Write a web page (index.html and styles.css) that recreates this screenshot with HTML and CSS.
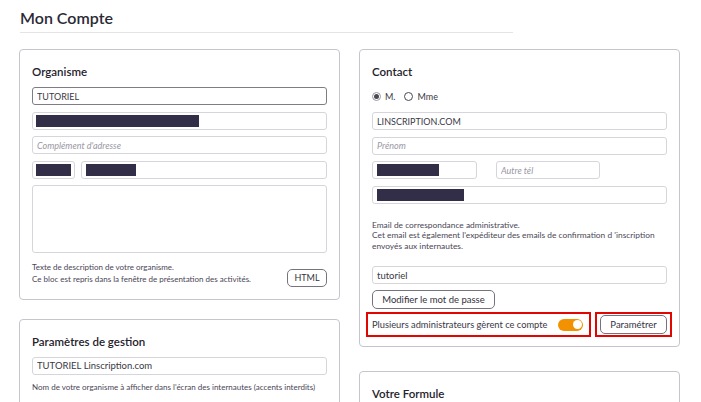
FILE: index.html
```html
<!DOCTYPE html>
<html lang="fr">
<head>
<meta charset="utf-8">
<title>Mon Compte</title>
<link rel="stylesheet" href="styles.css">
</head>
<body>
<div class="page">
  <h1 class="title">Mon Compte</h1>
  <div class="rule"></div>
  <div class="columns">
    <div class="col col-left">
      <section class="card">
        <h2 class="card-title">Organisme</h2>
        <div class="stack">
          <input class="input input-focus" type="text" value="TUTORIEL">
          <div class="field"><span class="redact redact-addr"></span></div>
          <input class="input" type="text" placeholder="Complément d'adresse">
          <div class="row-city">
            <div class="field field-cp"><span class="redact redact-cp"></span></div>
            <div class="field field-city"><span class="redact redact-city"></span></div>
          </div>
          <div class="field field-area"></div>
        </div>
        <div class="desc-row">
          <p class="help">Texte de description de votre organisme.<br>Ce bloc est repris dans la fenêtre de présentation des activités.</p>
          <button class="btn btn-html" type="button">HTML</button>
        </div>
      </section>
      <section class="card">
        <h2 class="card-title">Paramètres de gestion</h2>
        <input class="input input-large" type="text" value="TUTORIEL Linscription.com">
        <p class="help help-gestion">Nom de votre organisme à afficher dans l'écran des internautes (accents interdits)</p>
      </section>
    </div>
    <div class="col col-right">
      <section class="card card-contact">
        <h2 class="card-title">Contact</h2>
        <div class="radios">
          <label class="radio"><span class="dot dot-on"></span>M.</label>
          <label class="radio"><span class="dot"></span>Mme</label>
        </div>
        <div class="stack">
          <input class="input" type="text" value="LINSCRIPTION.COM">
          <input class="input" type="text" placeholder="Prénom">
          <div class="row-phone">
            <div class="field field-phone"><span class="redact redact-phone"></span></div>
            <input class="input input-phone" type="text" placeholder="Autre tél">
          </div>
          <div class="field"><span class="redact redact-mail"></span></div>
        </div>
        <p class="help help-mail">Email de correspondance administrative.<br>Cet email est également l'expéditeur des emails de confirmation d 'inscription envoyés aux internautes.</p>
        <input class="input input-large input-login" type="text" value="tutoriel">
        <button class="btn btn-password" type="button">Modifier le mot de passe</button>
        <div class="admin-row">
          <div class="mark mark-toggle">
            <span class="admin-label">Plusieurs administrateurs gèrent ce compte</span>
            <span class="switch"><span class="knob"></span></span>
          </div>
          <div class="mark mark-btn">
            <button class="btn btn-param" type="button">Paramétrer</button>
          </div>
        </div>
      </section>
      <section class="card card-formule">
        <h2 class="card-title">Votre Formule</h2>
      </section>
    </div>
  </div>
</div>
</body>
</html>
```
FILE: styles.css
```css
* { box-sizing: border-box; }
html, body { margin: 0; padding: 0; background: #ffffff; }
body {
  font-family: Lato, "Noto Sans", "Liberation Sans", sans-serif;
  color: #2c2a36;
  overflow: hidden;
}
.page { padding: 8px 0 0 19px; }
.title {
  margin: 0 0 0 1px;
  font-size: 16px;
  line-height: 20px;
  font-weight: 600;
  color: #2b2935;
}
.rule {
  margin: 4px 0 0 1px;
  width: 493px;
  height: 1px;
  background: #e4e4e8;
}
.columns {
  margin-top: 16px;
  display: grid;
  grid-template-columns: 321px 321px;
  column-gap: 19px;
  align-items: start;
}
.col { display: flex; flex-direction: column; }
.col-left { gap: 19px; }
.col-right { gap: 24px; }
.card {
  border: 1px solid #c6c5cd;
  border-radius: 4px;
  padding: 15px 12px 12px 12px;
  background: #fff;
}
.card-title {
  margin: 0 0 8px 0;
  font-size: 11.5px;
  line-height: 14px;
  font-weight: 600;
  color: #24222c;
}
.stack { display: flex; flex-direction: column; gap: 6.5px; }
.input, .field {
  display: block;
  width: 100%;
  height: 18px;
  border: 1px solid #d6d5db;
  border-radius: 3px;
  background: #fff;
  font-family: Lato, "Noto Sans", sans-serif;
  font-size: 9px;
  color: #3a3845;
  padding: 0 4px;
  margin: 0;
  outline: none;
}
.input::placeholder { color: #9a98a3; font-style: italic; }
.input-focus { border-color: #7f7c88; }
.input-large { font-size: 9.5px; }
.field { display: flex; align-items: center; padding: 0 3px; }
.redact { display: block; height: 12px; background: #332e47; }
.redact-addr { width: 163px; }
.row-city { display: flex; gap: 6px; }
.field-cp { width: 43px; flex: none; }
.redact-cp { width: 36px; }
.field-city { flex: 1; padding-left: 4px; }
.redact-city { width: 50px; }
.field-area { height: 68px; }
.desc-row {
  margin-top: 7.5px;
  display: flex;
  justify-content: space-between;
  align-items: flex-start;
}
.help {
  margin: 0;
  font-size: 8px;
  line-height: 12px;
  color: #4a4656;
}
.btn {
  font-family: Lato, "Noto Sans", sans-serif;
  background: #fff;
  border: 1px solid #76737f;
  border-radius: 5px;
  color: #34323e;
  padding: 0;
  cursor: pointer;
}
.btn-html {
  margin-top: 8px;
  width: 40px;
  height: 18px;
  font-size: 9px;
}
.help-gestion { margin-top: 6px; }
.radios {
  margin: 11px 0 10px 0;
  height: 12px;
  display: flex;
  align-items: center;
  gap: 9px;
  font-size: 9px;
  color: #3a3845;
}
.radio { display: flex; align-items: center; gap: 4px; }
.dot {
  width: 9px;
  height: 9px;
  border: 1px solid #4b4856;
  border-radius: 50%;
  display: flex;
  align-items: center;
  justify-content: center;
}
.dot-on::after {
  content: "";
  width: 5px;
  height: 5px;
  border-radius: 50%;
  background: #4b4856;
}
.dot-on { border-color: #9a98a3; background: #fff; }
.row-phone { display: flex; gap: 19px; }
.field-phone { width: 105px; flex: none; padding-left: 4px; }
.redact-phone { width: 62px; }
.input-phone { width: 104px; }
.redact-mail { width: 87px; margin-left: 1px; }
.help-mail {
  margin-top: 16px;
  font-size: 8.4px;
  line-height: 10.5px;
  padding-right: 10px;
}
.input-login { margin-top: 15px; }
.btn-password {
  display: block;
  margin-top: 6px;
  width: 123px;
  height: 19px;
  font-size: 9.5px;
}
.card-contact { padding-bottom: 9px; }
.admin-row {
  margin: 3px 0 0 -6px;
  display: flex;
  gap: 4px;
  align-items: flex-start;
}
.mark { border: 2px solid #e10600; flex: none; }
.mark-toggle {
  width: 225px;
  padding: 3px 6px 3px 4px;
  display: flex;
  align-items: center;
  justify-content: space-between;
  height: 25px;
}
.admin-label { font-size: 9.3px; color: #3a3845; }
.switch {
  width: 25px;
  height: 12px;
  border-radius: 6px;
  background: #f39200;
  display: flex;
  align-items: center;
  justify-content: flex-end;
  padding-right: 1.5px;
}
.knob { width: 9px; height: 9px; border-radius: 50%; background: #fff; }
.mark-btn { width: 77px; padding: 1px 3px; }
.btn-param { display: block; width: 67px; height: 19px; font-size: 9.5px; }
.card-formule { height: 60px; }
```
